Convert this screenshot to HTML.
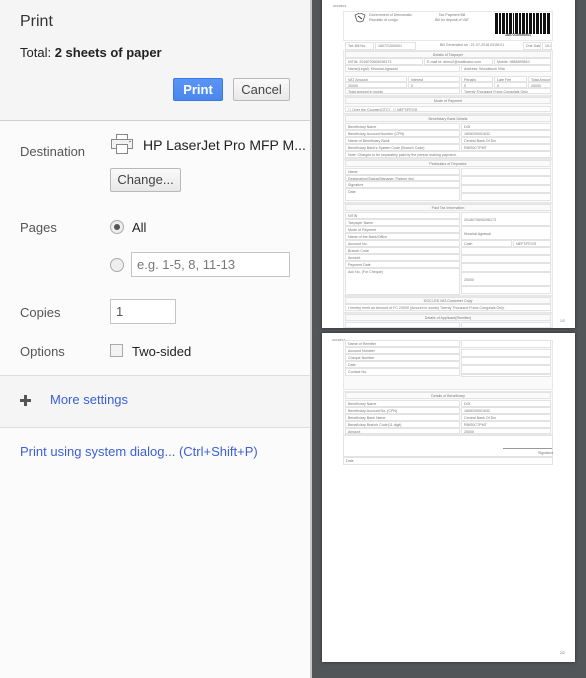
<!DOCTYPE html>
<html><head><meta charset="utf-8"><style>
*{margin:0;padding:0;box-sizing:border-box}
body{width:586px;height:678px;overflow:hidden;position:relative;font-family:"Liberation Sans",sans-serif;background:#525659}
#left{position:absolute;left:0;top:0;width:310px;height:678px;background:#fbfbfb}
#hdr{position:absolute;left:0;top:0;width:310px;height:121px;background:#f5f5f5;border-bottom:1px solid #d0d0d0}
#edge{position:absolute;left:310px;top:0;width:2px;height:678px;background:#c8c8c8}
.a{position:absolute;white-space:nowrap}
.lbl{font-size:13px;color:#555}
.btn{position:absolute;border:1px solid #b9b9b9;border-radius:2px;background:linear-gradient(#fafafa,#e8e8e8);font-size:13px;color:#444;text-align:center}
.inp{position:absolute;border:1px solid #c4c4c4;background:#fff;font-size:13px;color:#555;padding-left:5px}
.page{position:absolute;background:#fff;box-shadow:0 0 3px rgba(0,0,0,.5)}
.c{position:absolute;border:1px solid #e3e3e3;font-size:3.6px;line-height:6px;color:#777;padding-left:2px;white-space:nowrap;overflow:hidden}
.s{position:absolute;border:1px solid #e8e8e8;background:#fafafa}
.h{text-align:center;padding-left:0}
.t{position:absolute;font-size:3.6px;color:#777;white-space:nowrap;line-height:5px}
</style></head><body>
<div id="left">
<div id="hdr"></div>
<div class="a" style="left:20px;top:13px;font-size:16px;color:#333">Print</div>
<div class="a" style="left:20px;top:45px;font-size:13px;color:#222">Total: <b>2 sheets of paper</b></div>
<div class="btn" style="left:173px;top:78px;width:50px;height:23px;line-height:21px;background:linear-gradient(#5a95f5,#4a87ee);border-color:#3b78e7;color:#fff;font-weight:bold">Print</div>
<div class="btn" style="left:233px;top:78px;width:57px;height:23px;line-height:21px">Cancel</div>
<div class="a lbl" style="left:20px;top:144px">Destination</div>
<svg class="a" style="left:111px;top:134px" width="22" height="20" viewBox="0 0 22 20"><rect x="5.5" y="0.5" width="11" height="5" fill="#fff" stroke="#888"/><rect x="0.5" y="5.5" width="21" height="9" fill="#f2f2f2" stroke="#888"/><rect x="5.5" y="10.5" width="11" height="9" fill="#fff" stroke="#888"/><rect x="18" y="7" width="2" height="1" fill="#888"/></svg>
<div class="a" style="left:143px;top:137px;font-size:14px;color:#222">HP LaserJet Pro MFP M...</div>
<div class="btn" style="left:110px;top:168px;width:71px;height:24px;line-height:22px">Change...</div>
<div class="a lbl" style="left:20px;top:220px">Pages</div>
<div class="a" style="left:110px;top:220px;width:14px;height:14px;border:1px solid #aaa;border-radius:50%;background:#eee"></div>
<div class="a" style="left:114px;top:224px;width:6px;height:6px;border-radius:50%;background:#555"></div>
<div class="a" style="left:132px;top:220px;font-size:13px;color:#222">All</div>
<div class="a" style="left:110px;top:258px;width:14px;height:14px;border:1px solid #aaa;border-radius:50%;background:#eee"></div>
<div class="inp" style="left:131px;top:252px;width:159px;height:25px;line-height:23px;color:#777">e.g. 1-5, 8, 11-13</div>
<div class="a lbl" style="left:20px;top:305px">Copies</div>
<div class="inp" style="left:110px;top:299px;width:66px;height:25px;line-height:23px">1</div>
<div class="a lbl" style="left:20px;top:344px">Options</div>
<div class="a" style="left:110px;top:344px;width:13px;height:13px;border:1px solid #aaa;background:#f3f3f3"></div>
<div class="a" style="left:132px;top:344px;font-size:13px;color:#222">Two-sided</div>
<div class="a" style="left:0;top:375px;width:310px;height:53px;background:#f5f5f5;border-top:1px solid #ddd;border-bottom:1px solid #ddd"></div>
<div class="a" style="left:20px;top:399px;width:11px;height:3px;background:#555"></div>
<div class="a" style="left:24px;top:395px;width:3px;height:11px;background:#555"></div>
<div class="a" style="left:50px;top:392px;font-size:13px;color:#3c5fd8">More settings</div>
<div class="a" style="left:20px;top:444px;font-size:13px;color:#3c5fd8">Print using system dialog... (Ctrl+Shift+P)</div>
</div>
<div id="edge"></div>

<!-- page 1 -->
<div class="page" style="left:322px;top:0;width:253px;height:328px">
<div class="t" style="left:11px;top:4px;font-size:3px">2024/8/15</div>
<div class="s" style="left:21px;top:11px;width:210px;height:30px;background:#fff"></div>
<div class="t" style="left:12px;top:13px;width:8px"></div>
<svg class="a" style="left:32px;top:13px" width="12" height="10"><path d="M1 2 L6 0 L11 2 L9 8 L6 9 L3 8Z" fill="none" stroke="#555" stroke-width="0.8"/><path d="M4 3 L8 6" stroke="#333"/></svg>
<div class="t" style="left:47px;top:13px">Government of Democratic<br>Republic of congo</div>
<div class="t" style="left:105px;top:13px;width:50px;text-align:center">Tax Payment Bill<br>Bill for deposit of VAT</div>
<svg class="a" style="left:173px;top:13px" width="56" height="21"><g fill="#111">
<rect x="0" y="0" width="3" height="21"/><rect x="4" y="0" width="2" height="21"/><rect x="7" y="0" width="3" height="21"/><rect x="11" y="0" width="2" height="21"/><rect x="14" y="0" width="3" height="21"/><rect x="18" y="0" width="1" height="21"/><rect x="20" y="0" width="3" height="21"/><rect x="24" y="0" width="2" height="21"/><rect x="27" y="0" width="3" height="21"/><rect x="31" y="0" width="2" height="21"/><rect x="34" y="0" width="3" height="21"/><rect x="38" y="0" width="2" height="21"/><rect x="41" y="0" width="3" height="21"/><rect x="45" y="0" width="2" height="21"/><rect x="48" y="0" width="3" height="21"/><rect x="52" y="0" width="3" height="21"/></g></svg>
<div class="t" style="left:183px;top:33px;font-weight:bold;color:#444">1807210000001</div>
<div class="c" style="left:23px;top:42px;width:29px;height:8px">Tax Bill No.</div>
<div class="c" style="left:53px;top:42px;width:41px;height:8px">180721000001</div>
<div class="t" style="left:118px;top:43px">Bill Generated on : 21-07-2018 03:06:01</div>
<div class="c" style="left:201px;top:42px;width:18px;height:8px">Due Date</div>
<div class="c" style="left:220px;top:42px;width:10px;height:8px">15-02</div>

<div class="s" style="left:21px;top:50px;width:210px;height:46px"></div>
<div class="c h" style="left:23px;top:51px;width:206px;height:7px">Details of Taxpayer</div>
<div class="c" style="left:23px;top:58px;width:78px;height:7px;background:#fff">NITIN: 2018070605298173</div>
<div class="c" style="left:102px;top:58px;width:69px;height:7px;background:#fff">E-mail Id: demo2@mailinator.com</div>
<div class="c" style="left:172px;top:58px;width:57px;height:7px;background:#fff">Mobile: 9865899810</div>
<div class="c" style="left:23px;top:65px;width:115px;height:7px;background:#fff">Name(Legal): Khushal Agrawal</div>
<div class="c" style="left:139px;top:65px;width:90px;height:7px;background:#fff">Address: Woodstock Villa</div>
<div class="c" style="left:23px;top:76px;width:62px;height:6px;background:#fff">VAT Amount</div>
<div class="c" style="left:86px;top:76px;width:52px;height:6px;background:#fff">Interest</div>
<div class="c" style="left:139px;top:76px;width:32px;height:6px;background:#fff">Penalty</div>
<div class="c" style="left:172px;top:76px;width:33px;height:6px;background:#fff">Late Fee</div>
<div class="c" style="left:206px;top:76px;width:23px;height:6px;background:#fff">Total Amount</div>
<div class="c" style="left:23px;top:82px;width:62px;height:6px;background:#fff">20000</div>
<div class="c" style="left:86px;top:82px;width:52px;height:6px;background:#fff">0</div>
<div class="c" style="left:139px;top:82px;width:32px;height:6px;background:#fff">0</div>
<div class="c" style="left:172px;top:82px;width:33px;height:6px;background:#fff">0</div>
<div class="c" style="left:206px;top:82px;width:23px;height:6px;background:#fff">20000</div>
<div class="c" style="left:23px;top:88px;width:115px;height:6px;background:#fff">Total amount in words</div>
<div class="c" style="left:139px;top:88px;width:90px;height:6px;background:#fff">Twenty Thousand Franc Congolais Only</div>

<div class="s" style="left:21px;top:96px;width:210px;height:18px"></div>
<div class="c h" style="left:23px;top:97px;width:206px;height:7px">Mode of Payment</div>
<div class="c" style="left:23px;top:106px;width:206px;height:6px;background:#fff">☐ Over the Counter(OTC) &nbsp; ☐ NEFT/RTGS</div>

<div class="s" style="left:21px;top:114px;width:210px;height:45px"></div>
<div class="c h" style="left:23px;top:115px;width:206px;height:7px">Beneficiary Bank Details</div>
<div class="c" style="left:23px;top:123px;width:115px;height:7px;background:#fff">Beneficiary Name</div>
<div class="c" style="left:139px;top:123px;width:90px;height:7px;background:#fff">DGI</div>
<div class="c" style="left:23px;top:130px;width:115px;height:7px;background:#fff">Beneficiary Account Number (CPN)</div>
<div class="c" style="left:139px;top:130px;width:90px;height:7px;background:#fff">1806200001632</div>
<div class="c" style="left:23px;top:137px;width:115px;height:7px;background:#fff">Name of Beneficiary Bank</div>
<div class="c" style="left:139px;top:137px;width:90px;height:7px;background:#fff">Central Bank Of Drc</div>
<div class="c" style="left:23px;top:144px;width:115px;height:7px;background:#fff">Beneficiary Bank's System Code (Branch Code)</div>
<div class="c" style="left:139px;top:144px;width:90px;height:7px;background:#fff">RBIS0CTPMT</div>
<div class="c" style="left:23px;top:151px;width:206px;height:7px;background:#fff">Note: Charges to be separately paid by the person making payment.</div>

<div class="s" style="left:21px;top:159px;width:210px;height:44px"></div>
<div class="c h" style="left:23px;top:160px;width:206px;height:7px">Particulars of Depositor</div>
<div class="c" style="left:23px;top:168px;width:115px;height:7px;background:#fff">Name</div>
<div class="c" style="left:23px;top:175px;width:115px;height:6px;background:#fff">Designation(Status(Manager, Partner etc)</div>
<div class="c" style="left:23px;top:181px;width:115px;height:7px;background:#fff">Signature</div>
<div class="c" style="left:23px;top:188px;width:115px;height:13px;background:#fff">Date</div>
<div class="c" style="left:139px;top:168px;width:90px;height:8px;background:#fff"></div>
<div class="c" style="left:139px;top:176px;width:90px;height:9px;background:#fff"></div>
<div class="c" style="left:139px;top:185px;width:90px;height:8px;background:#fff"></div>
<div class="c" style="left:139px;top:193px;width:90px;height:8px;background:#fff"></div>

<div class="s" style="left:21px;top:203px;width:210px;height:93px"></div>
<div class="c h" style="left:23px;top:204px;width:206px;height:7px">Paid Tax Information</div>
<div class="c" style="left:23px;top:212px;width:115px;height:7px;background:#fff">NITIN</div>
<div class="c" style="left:23px;top:219px;width:115px;height:7px;background:#fff">Taxpayer Name</div>
<div class="c" style="left:23px;top:226px;width:115px;height:7px;background:#fff">Mode of Payment</div>
<div class="c" style="left:23px;top:233px;width:115px;height:7px;background:#fff">Name of the Bank/Office</div>
<div class="c" style="left:23px;top:240px;width:115px;height:7px;background:#fff">Account No.</div>
<div class="c" style="left:23px;top:247px;width:115px;height:7px;background:#fff">Branch Code</div>
<div class="c" style="left:23px;top:254px;width:115px;height:7px;background:#fff">Amount</div>
<div class="c" style="left:23px;top:261px;width:115px;height:7px;background:#fff">Payment Date</div>
<div class="c" style="left:23px;top:268px;width:115px;height:27px;background:#fff">Ack No. (For Cheque)</div>
<div class="c" style="left:139px;top:212px;width:90px;height:14px;background:#fff;line-height:14px">2018070605298173</div>
<div class="c" style="left:139px;top:226px;width:90px;height:14px;background:#fff;line-height:14px">Khushal Agrawal</div>
<div class="c" style="left:139px;top:240px;width:51px;height:7px;background:#fff">Cash</div>
<div class="c" style="left:191px;top:240px;width:38px;height:7px;background:#fff">NEFT/RTGS</div>
<div class="c" style="left:139px;top:247px;width:90px;height:8px;background:#fff"></div>
<div class="c" style="left:139px;top:255px;width:90px;height:8px;background:#fff"></div>
<div class="c" style="left:139px;top:263px;width:90px;height:9px;background:#fff"></div>
<div class="c" style="left:139px;top:272px;width:90px;height:14px;background:#fff;line-height:14px">20000</div>
<div class="c" style="left:139px;top:286px;width:90px;height:8px;background:#fff"></div>

<div class="s" style="left:21px;top:296px;width:210px;height:17px"></div>
<div class="c h" style="left:23px;top:297px;width:206px;height:7px">DGCI-GS VAT-Customer Copy</div>
<div class="c" style="left:23px;top:304px;width:206px;height:7px;background:#fff">I hereby remit an Amount of FC 20000 (Amount in words) Twenty Thousand Franc Congolais Only.</div>
<div class="s" style="left:21px;top:313px;width:210px;height:15px"></div>
<div class="c h" style="left:23px;top:314px;width:206px;height:7px">Details of Applicant(Remitter)</div>
<div class="c" style="left:23px;top:322px;width:115px;height:6px;background:#fff"></div>
<div class="c" style="left:139px;top:322px;width:90px;height:6px;background:#fff"></div>
<div class="t" style="left:238px;top:319px;font-size:3.5px">1/2</div>
</div>

<!-- page 2 -->
<div class="page" style="left:322px;top:333px;width:253px;height:329px">
<div class="t" style="left:10px;top:5px;font-size:3px">2024/8/15</div>
<div class="s" style="left:21px;top:7px;width:210px;height:50px"></div>
<div class="c" style="left:23px;top:7px;width:115px;height:7px;background:#fff">Name of Remitter</div>
<div class="c" style="left:23px;top:14px;width:115px;height:7px;background:#fff">Account Number</div>
<div class="c" style="left:23px;top:21px;width:115px;height:7px;background:#fff">Cheque Number</div>
<div class="c" style="left:23px;top:28px;width:115px;height:7px;background:#fff">Date</div>
<div class="c" style="left:23px;top:35px;width:115px;height:8px;background:#fff">Contact No.</div>
<div class="c" style="left:139px;top:7px;width:90px;height:8px;background:#fff"></div>
<div class="c" style="left:139px;top:16px;width:90px;height:8px;background:#fff"></div>
<div class="c" style="left:139px;top:24px;width:90px;height:8px;background:#fff"></div>
<div class="c" style="left:139px;top:32px;width:90px;height:9px;background:#fff"></div>
<div class="c" style="left:139px;top:41px;width:90px;height:3px;background:#fff"></div>
<div class="s" style="left:21px;top:46px;width:210px;height:56px;display:none"></div>
<div class="s" style="left:21px;top:58px;width:210px;height:44px"></div>
<div class="c h" style="left:23px;top:59px;width:206px;height:7px">Details of Beneficiary</div>
<div class="c" style="left:23px;top:67px;width:115px;height:7px;background:#fff">Beneficiary Name</div>
<div class="c" style="left:139px;top:67px;width:90px;height:7px;background:#fff">DGI</div>
<div class="c" style="left:23px;top:74px;width:115px;height:7px;background:#fff">Beneficiary Account No. (CPN)</div>
<div class="c" style="left:139px;top:74px;width:90px;height:7px;background:#fff">1806200001632</div>
<div class="c" style="left:23px;top:81px;width:115px;height:7px;background:#fff">Beneficiary Bank Name</div>
<div class="c" style="left:139px;top:81px;width:90px;height:7px;background:#fff">Central Bank Of Drc</div>
<div class="c" style="left:23px;top:88px;width:115px;height:7px;background:#fff">Beneficiary Branch Code(11 digit)</div>
<div class="c" style="left:139px;top:88px;width:90px;height:7px;background:#fff">RBIS0CTPMT</div>
<div class="c" style="left:23px;top:95px;width:115px;height:6px;background:#fff">Amount</div>
<div class="c" style="left:139px;top:95px;width:90px;height:6px;background:#fff">20000</div>
<div class="c" style="left:21px;top:102px;width:210px;height:22px;background:#fff"></div>
<div class="a" style="left:181px;top:115px;width:49px;height:1px;background:#999"></div>
<div class="t" style="left:216px;top:118px">Signature</div>
<div class="c" style="left:21px;top:124px;width:210px;height:8px;background:#fff">Date</div>
<div class="t" style="left:238px;top:318px;font-size:3.5px">2/2</div>
</div>
</body></html>
